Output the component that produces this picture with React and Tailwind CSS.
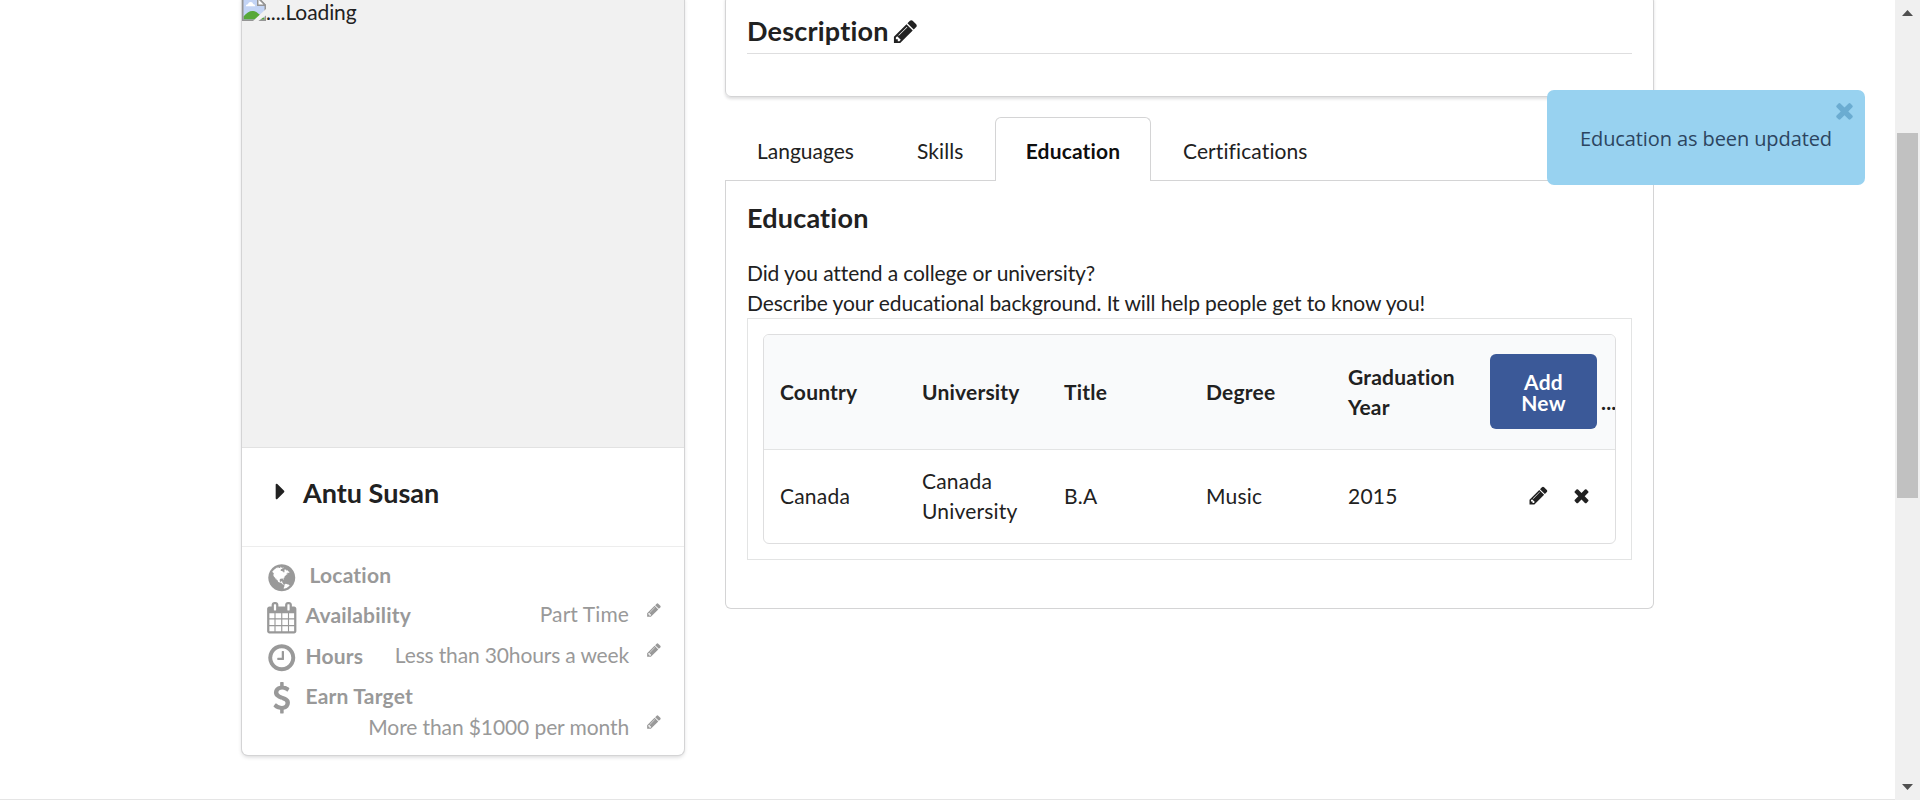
const PATHS = {
  pencil:
    "M491 1536l91-91-235-235-91 91v107h128v128h107zm523-928q0-22-22-22-10 0-17 7l-542 542q-7 7-7 17 0 22 22 22 10 0 17-7l542-542q7-7 7-17zm-54-192l416 416-832 832h-416v-416zm683 96q0 53-37 90l-166 166-416-416 166-165q36-38 90-38 53 0 91 38l235 234q37 39 37 91z",
  close:
    "M1490 1322q0 40-28 68l-136 136q-28 28-68 28t-68-28l-294-294-294 294q-28 28-68 28t-68-28l-136-136q-28-28-28-68t28-68l294-294-294-294q-28-28-28-68t28-68l136-136q28-28 68-28t68 28l294 294 294-294q28-28 68-28t68 28l136 136q28 28 28 68t-28 68l-294 294 294 294q28 28 28 68z",
  caret:
    "M1152 896q0 26-19 45l-448 448q-19 19-45 19t-45-19-19-45v-896q0-26 19-45t45-19 45 19l448 448q19 19 19 45z",
  clock:
    "M1024 544v448q0 14-9 23t-23 9h-320q-14 0-23-9t-9-23v-64q0-14 9-23t23-9h224v-352q0-14 9-23t23-9h64q14 0 23 9t9 23zm416 352q0-148-73-273t-198-198-273-73-273 73-198 198-73 273 73 273 198 198 273 73 273-73 198-198 73-273zm224 0q0 209-103 385.5t-279.5 279.5-385.5 103-385.5-103-279.5-279.5-103-385.5 103-385.5 279.5-279.5 385.5-103 385.5 103 279.5 279.5 103 385.5z",
  dollar:
    "M1362 1185q0 153-99.5 263.5t-258.5 136.5v175q0 14-9 23t-23 9h-135q-13 0-22.5-9.5t-9.5-22.5v-175q-66-9-127.5-31t-101.5-44.5-74-48-46.5-37.5-17.5-18q-17-21-2-41l103-135q7-10 23-12 15-2 24 9l2 2q113 99 243 125 37 8 74 8 81 0 142.5-43t61.5-122q0-28-15-53t-33.5-42-58.5-37.5-66-32-80-32.5q-39-16-61.5-25t-61.5-26.5-62.5-31-56.5-35.5-53.5-42.5-43.5-49-35.5-58-21-66.5-8.5-78q0-138 98-242t255-134v-180q0-13 9.5-22.5t22.5-9.5h135q14 0 23 9t9 23v176q57 6 110.5 23t87 33.5 63.5 37.5 39 29 15 14q17 18 5 38l-81 146q-8 15-23 16-14 3-27-7-3-3-14.5-12t-39-26.5-58.5-32-74.5-26-85.5-11.5q-95 0-155 43t-60 111q0 26 8.5 48t29.5 41.5 39.5 33 56 31 60.5 27 70 27.5q53 20 81 31.5t76 35 75.5 42.5 62 50 53 63.5 31.5 76.5 13 94z",
  calendar:
    "M192 1664h288v-288h-288v288zm352 0h320v-288h-320v288zm-352-352h288v-320h-288v320zm352 0h320v-320h-320v320zm-352-384h288v-288h-288v288zm736 736h320v-288h-320v288zm-384-736h320v-288h-320v288zm768 736h288v-288h-288v288zm-384-352h320v-320h-320v320zm-352-864v-288q0-13-9.5-22.5t-22.5-9.5h-64q-13 0-22.5 9.5t-9.5 22.5v288q0 13 9.5 22.5t22.5 9.5h64q13 0 22.5-9.5t9.5-22.5zm736 864h288v-320h-288v320zm-384-384h320v-288h-320v288zm384 0h288v-288h-288v288zm32-480v-288q0-13-9.5-22.5t-22.5-9.5h-64q-13 0-22.5 9.5t-9.5 22.5v288q0 13 9.5 22.5t22.5 9.5h64q13 0 22.5-9.5t9.5-22.5zm384-64v1280q0 52-38 90t-90 38h-1408q-52 0-90-38t-38-90v-1280q0-52 38-90t90-38h128v-96q0-66 47-113t113-47h64q66 0 113 47t47 113v96h384v-96q0-66 47-113t113-47h64q66 0 113 47t47 113v96h128q52 0 90 38t38 90z",
  globe:
    "M896 128q209 0 385.5 103t279.5 279.5 103 385.5-103 385.5-279.5 279.5-385.5 103-385.5-103-279.5-279.5-103-385.5 103-385.5 279.5-279.5 385.5-103zm274 521q-2 1-9.5 9.5t-13.5 9.5q2 0 4.5-5t5-11 3.5-7q6-7 22-15 14-6 52-12 34-8 51 11-2-2 9.5-13t14.5-12q3-2 15-4.5t15-7.5l2-22q-12 1-17.5-7t-6.5-21q0 2-6 8 0-7-4.5-8t-11.5 1-9 1q-10-3-15-7.5t-8-16.5-4-15q-2-5-9.5-11t-9.5-10q-1-2-2.5-5.5t-3-6.5-4-5.5-5.5-2.5-7 5-7.5 10-4.5 5q-3-2-6-1.5t-4.5 1-4.5 3-5 3.5q-3 2-8.5 3t-8.5 2q15-5-1-11-10-4-16-3 9-4 7.5-12t-8.5-14h5q-1-4-8.5-8.5t-17.5-8.5-13-6q-8-5-34-9.5t-33-.5q-5 6-4.5 10.5t4 14 3.5 12.5q1 6-5.5 13t-6.5 12q0 7 14 15.5t10 21.5q-3 8-16 16t-16 12q-5 8-1.5 18.5t10.5 16.5q2 2 1.5 4t-3.5 4.5-5.5 4-6.5 3.5l-3 2q-11 5-20.5-6t-13.5-26q-7-25-16-30-23-8-29 1-5-13-41-26-25-9-58-4 6-1 0-15-7-15-19-12 3-6 4-17.5t1-13.5q3-13 12-23 1-1 7-8.5t9.5-13.5.5-6q35 4 50-11 5-5 11.5-17t10.5-17q9-6 14-5.5t14.5 5.5 14.5 5q14 1 15.5-11t-7.5-20q12 1 3-17-4-7-8-9-12-4-27 5-8 4 2 8-1-1-9.5 10.5t-16.5 17.5-16-5q-1-1-5.5-13.5t-9.5-13.5q-8 0-16 15 3-8-11-15t-24-8q19-12-8-27-7-4-20.5-5t-19.5 4q-5 7-5.5 11.5t5 8 10.5 5.5 11.5 4 8.5 3q14 10 8 14-2 1-8.5 3.5t-11.5 4.5-6 4q-3 4 0 14t-2 14q-5-5-9-17.5t-7-16.5q7 9-25 6l-10-1q-4 0-16 2t-20.5 1-13.5-8q-4-8 0-20 1-4 4-2-4-3-11-9.5t-10-8.5q-46 15-94 41 6 1 12-1 5-2 13-6.5t10-5.5q34-14 42-7l5-5q14 16 20 25-7-4-30-1-20 6-22 12 7 12 5 18-4-3-11.5-10t-14.5-11-15-5q-16 0-22 1-146 80-235 222 7 7 12 8 4 1 5 9t2.5 11 11.5-3q9 8 3 19 1-1 44 27 19 17 21 21 3 11-10 18-1-2-9-9t-9-4q-3 5 .5 18.5t10.5 12.5q-7 0-9.5 16t-2.5 35.5-1 23.5l2 1q-3 12 5.5 34.5t21.5 19.5q-13 3 20 43 6 8 8 9 3 2 12 7.5t15 10 10 10.5q4 5 10 22.5t14 23.5q-2 6 9.5 20t10.5 23q-1 0-2.5 1t-2.5 1q3 7 15.5 14t15.5 13q1 3 2 10t3 11 8 2q2-20-24-62-15-25-17-29-3-5-5.5-15.5t-4.5-14.5q2 0 6 1.5t8.5 3.5 7.5 4 2 3q-3 7 2 17.5t12 18.5 17 19 12 13q6 6 14 19.5t0 13.5q9 0 20 10.5t17 19.5q5 8 8 26t5 24q2 7 8.5 13.5t12.5 9.5l16 8 13 7q5 2 18.5 10.5t21.5 11.5q10 4 16 4t14.5-2.5 13.5-3.5q15-2 29 15t21 21q36 19 55 11-2 1 .5 7.5t8 15.5 9 14.5 5.5 8.5q5 6 18 15t18 15q6-4 7-9-3 8 7 20t18 10q14-3 14-32-31 15-49-18 0-1-2.5-5.5t-4-8.5-2.5-8.5 0-7.5 5-3q9 0 10-3.5t-2-12.5-4-13q-1-8-11-20t-12-15q-5 9-16 8t-16-9q0 1-1.5 5.5t-1.5 6.5q-13 0-15-1 1-3 2.5-17.5t3.5-22.5q1-4 5.5-12t7.5-14.5 4-12.5-4.5-9.5-17.5-2.5q-19 1-26 20-1 3-3 10.5t-5 11.5-9 7q-7 3-24 2t-24-5q-13-8-22.5-29t-9.5-37q0-10 2.5-26.5t3-25-5.5-24.5q3-2 9-9.5t10-10.5q2-1 4.5-1.5t4.5 0 4-1.5 3-6q-1-1-4-3-3-3-4-3 7 3 28.5-1.5t27.5 1.5q15 11 22-2 0-1-2.5-9.5t-.5-13.5q5 27 29 9 3 3 15.5 5t17.5 5q3 2 7 5.5t5.5 4.5 5-.5 8.5-6.5q10 14 12 24 11 40 19 44 7 3 11 2t4.5-9.5 0-14-1.5-12.5l-1-8v-18l-1-8q-15-3-18.5-12t1.5-18.5 15-18.5q1-1 8-3.5t15.5-6.5 12.5-8q21-19 15-35 7 0 11-9-1 0-5-3t-7.5-5-4.5-2q9-5 2-16 5-3 7.5-11t7.5-10q9 12 21 2 8-8 1-16 5-7 20.5-10.5t18.5-9.5q7 2 8-2t1-12 3-12q4-5 15-9t13-5l17-11q3-4 0-4 18 2 31-11 10-11-6-20 3-6-3-9.5t-15-5.5q3-1 11.5-.5t10.5-1.5q15-10-7-16-17-5-43 12zm-163 877q206-36 351-189-3-3-12.5-4.5t-12.5-3.5q-18-7-24-8 1-7-2.5-13t-8-9-12.5-8-11-7q-2-2-7-6t-7-5.5-7.5-4.5-8.5-2-10 1l-3 1q-3 1-5.5 2.5t-5.5 3-4 3 0 2.5q-21-17-36-22-5-1-11-5.5t-10.5-7-10-1.5-11.5 7q-5 5-6 15t-2 13q-7-5 0-17.5t2-18.5q-3-6-10.5-4.5t-12 4.5-11.5 8.5-9 6.5-8.5 5.5-8.5 7.5q-3 4-6 12t-5 11q-2-4-11.5-6.5t-9.5-5.5q2 10 4 35t5 38q7 31-12 48-27 25-29 40-4 22 12 26 0 7-8 20.5t-7 21.5q0 6 2 16z",
};

function Icon({ name, className }) {
  return (
    <svg viewBox="0 0 1792 1792" fill="currentColor" overflow="visible" className={`shrink-0 ${className}`}>
      <path d={PATHS[name]} />
    </svg>
  );
}

function BrokenImage() {
  return (
    <svg viewBox="0 0 16 16" className="size-6 shrink-0">
      <path d="M.5.5h10.2l4.8 4.8v10.2H.5z" fill="#c3d4f5" />
      <path d="M2.5 6.2q.2-1.3 1.4-1.4.6-1.6 2-1.5 1.3.1 1.5 1.4 1.5.1 1.4 1.5z" fill="#fff" />
      <path d="M1 15V13q3-4 6.5-3.7 2 .2 3.5 1.8l4 3v1z" fill="#57a839" />
      <path d="M.5 15.5V.5h10.2l4.8 4.8v10.2z" fill="none" stroke="#959595" />
      <path d="M10.5.5v5h5z" fill="#fff" stroke="#959595" />
      <path d="M16.5 7.6L6.8 16.5h3.4l6.3-4.5z" fill="#f1f1f1" />
    </svg>
  );
}

function Detail({ icon, label, value, className, labelClass, iconClass, valueClass, editClass }) {
  return (
    <div className={`flex items-start pl-[24px] pr-[22px] ${className}`}>
      <Icon name={icon} className={`size-[31.5px] ${iconClass}`} />
      <b className={`tracking-[0.2px] ${labelClass}`}>{label}</b>
      {value && (
        <div className="ml-auto flex items-start">
          <span className={valueClass}>{value}</span>
          <Icon name="pencil" className={`ml-[17px] size-[16px] ${editClass}`} />
        </div>
      )}
    </div>
  );
}

function ProfileCard() {
  return (
    <section className="-mt-[5px] ml-[242px] h-[760px] w-[442px] overflow-hidden rounded-[6px] bg-white shadow-[0_0_0_1px_#d4d4d5,0_1.5px_4px_0_#d4d4d5]">
      <div className="flex h-[453px] items-start border-b border-[#e2e2e2] bg-[#f1f1f1] pt-[2px]">
        <BrokenImage />
        <span className="tracking-[-0.1px]">....Loading</span>
      </div>
      <div className="flex h-[99px] items-start border-b border-[#ededed] text-[27px] font-bold leading-[34px]">
        <Icon name="caret" className="ml-[25px] mt-[30px] size-[27px]" />
        <h2 className="ml-[9px] mt-[28px]">Antu Susan</h2>
      </div>
      <div className="text-[#999]">
        <Detail icon="globe" label="Location" className="h-[40px] pt-[13px]" iconClass="mt-[2px]" labelClass="ml-[12px]" />
        <Detail icon="calendar" label="Availability" value="Part Time" className="h-[55px] pt-[13px]" iconClass="mt-[2px]" labelClass="ml-[8px]" valueClass="-mt-px tracking-[0.1px]" editClass="mt-[2px]" />
        <Detail icon="clock" label="Hours" value="Less than 30hours a week" className="h-[40px]" iconClass="mt-0" labelClass="ml-[8px] -mt-px" valueClass="-mt-[2px] tracking-[-0.15px]" editClass="mt-0" />
        <Detail icon="dollar" label="Earn Target" className="h-[31px]" iconClass="mt-0" labelClass="ml-[8px] -mt-px" />
        <div className="-mt-px flex items-start justify-end pr-[22px]">
          <span className="tracking-[-0.1px]">More than $1000 per month</span>
          <Icon name="pencil" className="ml-[17px] mt-[2px] size-[16px]" />
        </div>
      </div>
    </section>
  );
}

function Tabs() {
  return (
    <nav className="mt-[20px] flex h-[64px] items-end">
      <div className="flex h-[64px] w-[270px] items-start border-b border-[#d4d4d5] pt-[19px]">
        <span className="w-[160px] pl-[32px]">Languages</span>
        <span className="pl-[32px] tracking-[0.1px]">Skills</span>
      </div>
      <div className="flex h-[64px] w-[156px] justify-center rounded-t-[6px] border border-b-0 border-[#d4d4d5] pt-[18px] font-bold tracking-[0.15px] text-black/95">
        Education
      </div>
      <div className="h-[64px] flex-1 border-b border-[#d4d4d5] pl-[32px] pt-[19px] tracking-[0.1px]">Certifications</div>
    </nav>
  );
}

function EducationTable() {
  return (
    <div className="h-[242px] w-[885px] border border-[#e3e4e4] p-[15px]">
      <div className="h-[210px] w-[853px] overflow-hidden rounded-[6px] border border-[#dededf] tracking-[0.2px]">
        <div className="grid h-[115px] grid-cols-[repeat(6,142px)] items-center border-b border-[#e3e4e4] bg-[#f9fafb] font-bold [&>*]:pl-[16px]">
          <span>Country</span>
          <span>University</span>
          <span>Title</span>
          <span>Degree</span>
          <span>Graduation Year</span>
          <div className="mb-px flex items-end overflow-hidden">
            <button className="h-[75px] w-[107px] shrink-0 rounded-[6px] bg-[#3b5998] px-[20px] pt-px leading-[21px] text-white">
              Add New
            </button>
            <span className="ml-[4px] pb-[12px]">...</span>
          </div>
        </div>
        <div className="grid h-[91px] grid-cols-[repeat(6,142px)] items-center [&>*]:pl-[16px]">
          <span>Canada</span>
          <span>Canada University</span>
          <span>B.A</span>
          <span>Music</span>
          <span>2015</span>
          <div className="flex items-center">
            <Icon name="pencil" className="ml-[38px] size-[21px]" />
            <Icon name="close" className="ml-[22px] size-[21px]" />
          </div>
        </div>
      </div>
    </div>
  );
}

function Toast() {
  return (
    <div className="absolute left-[1547px] top-[90px] flex h-[95px] w-[318px] justify-center rounded-[7px] bg-[#98d2f0] pt-[34px] font-['Open_Sans','Noto_Sans',sans-serif] text-[20px] tracking-[-0.1px] text-[#2c4560]">
      <span className="whitespace-nowrap">Education as been updated</span>
      <Icon name="close" className="absolute right-[8px] top-[8px] size-[25px] text-[#6bacd1]" />
    </div>
  );
}

function Scrollbar() {
  return (
    <aside className="flex h-[800px] w-[25px] shrink-0 flex-col items-center bg-[#f0f0f0]">
      <svg viewBox="0 0 11 6" className="mt-[10px] h-[6px] w-[11px]" fill="#505050">
        <path d="M0 6L5.5 0L11 6z" />
      </svg>
      <div className="mt-[117px] h-[365px] w-[21px] bg-[#c1c1c1]" />
      <svg viewBox="0 0 11 6" className="mb-[10px] mt-auto h-[6px] w-[11px]" fill="#505050">
        <path d="M0 0L5.5 6L11 0z" />
      </svg>
    </aside>
  );
}

export default function App() {
  return (
    <div className="relative flex h-[800px] w-[1920px] overflow-hidden bg-white font-['Lato',sans-serif] text-[21px] leading-[30px] text-[#212121] [font-variant-ligatures:none]">
      <main className="flex h-[800px] w-[1895px] items-start border-b border-[#e5e5e5]">
        <ProfileCard />
        <div className="ml-[41px] w-[929px]">
          <section className="-mt-[5px] h-[102px] rounded-[6px] border border-[#d4d4d5] px-[21px] pt-[18px] shadow-[0_1.5px_3px_0_rgba(34,36,38,0.15)]">
            <div className="flex h-[40px] items-start border-b border-[#dededf] text-[27px] font-bold leading-[34px]">
              <h3 className="tracking-[0.2px]">Description</h3>
              <Icon name="pencil" className="ml-[3px] mt-[4px] size-[27px]" />
            </div>
          </section>
          <Tabs />
          <section className="h-[428px] rounded-b-[6px] border border-t-0 border-[#d4d4d5] px-[21px]">
            <h3 className="pt-[20px] text-[27px] font-bold leading-[34px] tracking-[0.2px]">Education</h3>
            <p className="mt-[23px] tracking-[-0.1px]">Did you attend a college or university?</p>
            <p className="tracking-[-0.1px]">Describe your educational background. It will help people get to know you!</p>
            <EducationTable />
          </section>
        </div>
      </main>
      <Scrollbar />
      <Toast />
    </div>
  );
}
